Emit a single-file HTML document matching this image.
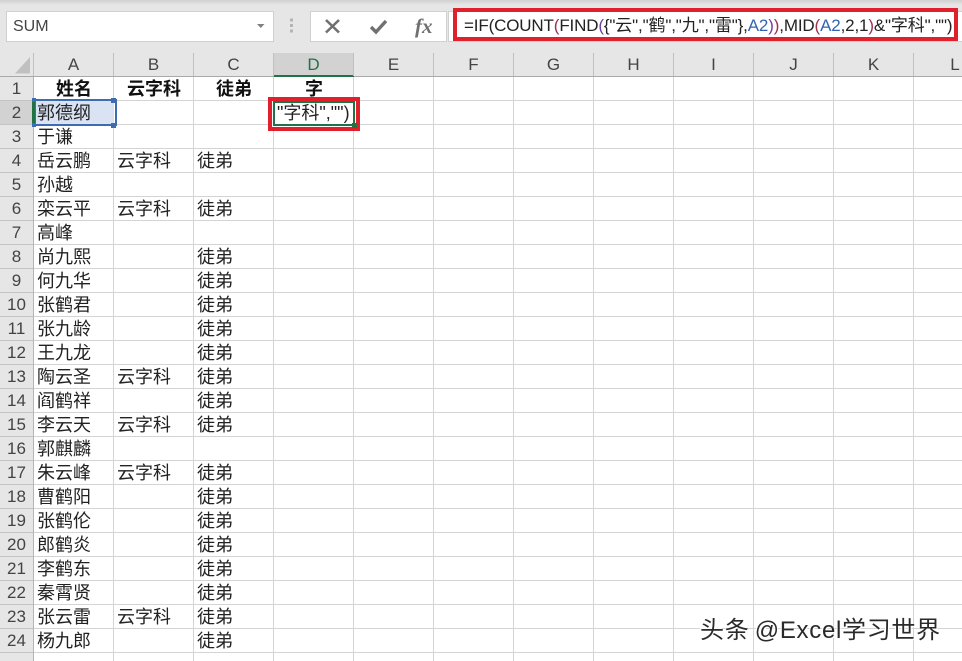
<!DOCTYPE html>
<html><head><meta charset="utf-8">
<style>
html,body{margin:0;padding:0;background:#fff}
#p{position:relative;width:962px;height:661px;overflow:hidden;background:#fff;font-family:"Liberation Sans","Noto Sans CJK SC",sans-serif;color:#222}
#p div{position:absolute;white-space:nowrap}
.r{left:0;width:962px;height:24px;line-height:24px;font-size:18px;margin-top:1px}
.r .n{left:0;width:33px;text-align:center;top:0;color:#444;background:#e6e6e6;height:23px;font-size:17px;border-bottom:1px solid #c4c4c4}
.r .a{left:37px;top:0}.r .b{left:117px;top:0}.r .c{left:197px;top:0}
.h{top:54px;width:79px;height:22px;line-height:22px;text-align:center;font-size:17px;color:#444}
.hb{top:53px;width:1px;height:23px;background:#c0c0c0}
.t{font-weight:bold;color:#111;font-size:18px;text-align:center;width:80px;top:0}
</style></head><body><div id="p">
<div style="left:0;top:0;width:962px;height:53px;background:#e6e6e6"></div>
<div style="left:0;top:0;width:962px;height:5px;background:linear-gradient(#cfcfcf,#e6e6e6)"></div>
<div style="left:0;top:53px;width:962px;height:24px;background:#e6e6e6"></div>
<div style="left:0;top:76px;width:962px;height:1px;background:#a9a9a9"></div>
<div style="left:6px;top:11px;width:266px;height:29px;background:#fff;border:1px solid #d0d0d0"></div>
<div style="left:13px;top:16px;font-size:16px;line-height:22px;color:#444">SUM</div>
<div style="left:310px;top:11px;width:135px;height:29px;background:#fff;border:1px solid #d0d0d0"></div>
<div style="left:448px;top:11px;width:514px;height:29px;background:#fff;border:1px solid #d0d0d0"></div>
<svg style="position:absolute;left:0;top:0" width="962" height="77">
<path d="M257 24h7.500l-3.700 4z" fill="#808080"/>
<path d="M290 18.500h3v3h-3zM290 24h3v3h-3zM290 29.500h3v3h-3z" fill="#b4b4b4"/>
<path d="M326 20l13 12.500M339 20l-13 12.500" stroke="#707070" stroke-width="2.600" fill="none"/>
<path d="M371 27l5 5 10-11" stroke="#707070" stroke-width="3.400" fill="none"/>
<path d="M30 57V73.500H15z" fill="#c0c0c0"/>
</svg>
<div style="left:415px;top:14px;font:italic bold 21px 'Liberation Serif',serif;line-height:24px;color:#707070">fx</div>
<div style="left:464px;top:15px;font-size:17px;line-height:22px;color:#222;letter-spacing:-.15px">=IF(COUNT<span style="color:#a03050">(</span>FIND<span style="color:#7040a0">(</span>{"云","鹤","九","雷"},<span style="color:#3465b0">A2</span><span style="color:#7040a0">)</span><span style="color:#a03050">)</span>,MID<span style="color:#a03050">(</span><span style="color:#3465b0">A2</span>,2,1<span style="color:#a03050">)</span>&amp;"字科","")</div>
<div style="left:453px;top:8px;width:497px;height:25px;border:4px solid #e0202c"></div>

<div style="left:274px;top:53px;width:79px;height:22px;background:#d2d2d2"></div>
<div style="left:274px;top:75px;width:80px;height:2px;background:#217346"></div>
<div class="h" style="left:34px">A</div><div class="h" style="left:114px">B</div><div class="h" style="left:194px">C</div><div class="h" style="left:274px;color:#217346">D</div><div class="h" style="left:354px">E</div><div class="h" style="left:434px">F</div><div class="h" style="left:514px">G</div><div class="h" style="left:594px">H</div><div class="h" style="left:674px">I</div><div class="h" style="left:754px">J</div><div class="h" style="left:834px">K</div><div class="h" style="left:915px;width:80px">L</div>
<div class="hb" style="left:33px"></div><div class="hb" style="left:113px"></div><div class="hb" style="left:193px"></div><div class="hb" style="left:273px"></div><div class="hb" style="left:353px"></div><div class="hb" style="left:433px"></div><div class="hb" style="left:513px"></div><div class="hb" style="left:593px"></div><div class="hb" style="left:673px"></div><div class="hb" style="left:753px"></div><div class="hb" style="left:833px"></div><div class="hb" style="left:913px"></div>

<svg style="position:absolute;left:0;top:77px" width="962" height="584">
<defs><pattern id="g" x="33" y="0" width="80" height="24" patternUnits="userSpaceOnUse"><path d="M.5 0V24" stroke="#d4d4d4" stroke-width="1"/><path d="M0 23.500H80" stroke="#d4d4d4" stroke-width="1"/></pattern></defs>
<rect x="33" y="0" width="929" height="584" fill="url(#g)"/>
</svg>

<div class="r" style="top:76px"><div class="n">1</div><div class="t" style="left:34px">姓名</div><div class="t" style="left:114px">云字科</div><div class="t" style="left:194px">徒弟</div><div class="t" style="left:274px">字</div></div>
<div style="left:34px;top:101px;width:80px;height:24px;background:#d9e3f3"></div>
<div class="r" style="top:100px"><div class="n" style="background:#d2d2d2;">2</div><div class="a">郭德纲</div></div>
<div class="r" style="top:124px"><div class="n">3</div><div class="a">于谦</div></div>
<div class="r" style="top:148px"><div class="n">4</div><div class="a">岳云鹏</div><div class="b">云字科</div><div class="c">徒弟</div></div>
<div class="r" style="top:172px"><div class="n">5</div><div class="a">孙越</div></div>
<div class="r" style="top:196px"><div class="n">6</div><div class="a">栾云平</div><div class="b">云字科</div><div class="c">徒弟</div></div>
<div class="r" style="top:220px"><div class="n">7</div><div class="a">高峰</div></div>
<div class="r" style="top:244px"><div class="n">8</div><div class="a">尚九熙</div><div class="c">徒弟</div></div>
<div class="r" style="top:268px"><div class="n">9</div><div class="a">何九华</div><div class="c">徒弟</div></div>
<div class="r" style="top:292px"><div class="n">10</div><div class="a">张鹤君</div><div class="c">徒弟</div></div>
<div class="r" style="top:316px"><div class="n">11</div><div class="a">张九龄</div><div class="c">徒弟</div></div>
<div class="r" style="top:340px"><div class="n">12</div><div class="a">王九龙</div><div class="c">徒弟</div></div>
<div class="r" style="top:364px"><div class="n">13</div><div class="a">陶云圣</div><div class="b">云字科</div><div class="c">徒弟</div></div>
<div class="r" style="top:388px"><div class="n">14</div><div class="a">阎鹤祥</div><div class="c">徒弟</div></div>
<div class="r" style="top:412px"><div class="n">15</div><div class="a">李云天</div><div class="b">云字科</div><div class="c">徒弟</div></div>
<div class="r" style="top:436px"><div class="n">16</div><div class="a">郭麒麟</div></div>
<div class="r" style="top:460px"><div class="n">17</div><div class="a">朱云峰</div><div class="b">云字科</div><div class="c">徒弟</div></div>
<div class="r" style="top:484px"><div class="n">18</div><div class="a">曹鹤阳</div><div class="c">徒弟</div></div>
<div class="r" style="top:508px"><div class="n">19</div><div class="a">张鹤伦</div><div class="c">徒弟</div></div>
<div class="r" style="top:532px"><div class="n">20</div><div class="a">郎鹤炎</div><div class="c">徒弟</div></div>
<div class="r" style="top:556px"><div class="n">21</div><div class="a">李鹤东</div><div class="c">徒弟</div></div>
<div class="r" style="top:580px"><div class="n">22</div><div class="a">秦霄贤</div><div class="c">徒弟</div></div>
<div class="r" style="top:604px"><div class="n">23</div><div class="a">张云雷</div><div class="b">云字科</div><div class="c">徒弟</div></div>
<div class="r" style="top:628px"><div class="n">24</div><div class="a">杨九郎</div><div class="c">徒弟</div></div>
<div class="r" style="top:652px"><div class="n" style="height:9px;border:0"></div></div>
<div style="left:33px;top:77px;width:1px;height:584px;background:#b5b5b5"></div>

<div style="left:34px;top:99px;width:79px;height:23px;border:2px solid #3f6cb0"></div>
<div style="left:32px;top:101px;width:3px;height:24px;background:#217346"></div>
<div style="left:111px;top:98px;width:5px;height:5px;background:#3f6cb0"></div>
<div style="left:111px;top:123px;width:5px;height:5px;background:#3f6cb0"></div>
<div style="left:32px;top:98px;width:4px;height:4px;background:#3f6cb0"></div>
<div style="left:32px;top:123px;width:4px;height:4px;background:#3f6cb0"></div>

<div style="left:268px;top:97px;width:84px;height:26px;border:4px solid #e0202c"></div>
<div style="left:272px;top:101px;width:84px;height:26px;background:#fff"></div>
<div style="left:277px;top:100px;font-size:18px;line-height:26px;color:#222">"字科",""<span>)</span></div>
<div style="left:273px;top:101px;width:82px;height:25px;border:2px solid #217346;box-sizing:border-box"></div>
<div style="left:352px;top:123px;width:5px;height:5px;background:#217346"></div>

<div style="left:700px;top:616px;font-size:24px;line-height:30px;color:#2a2a2a;letter-spacing:.7px;word-spacing:-2px;text-shadow:1px 1px 0 #fff,-1px -1px 0 #fff">头条 @Excel学习世界</div>
</div></body></html>
